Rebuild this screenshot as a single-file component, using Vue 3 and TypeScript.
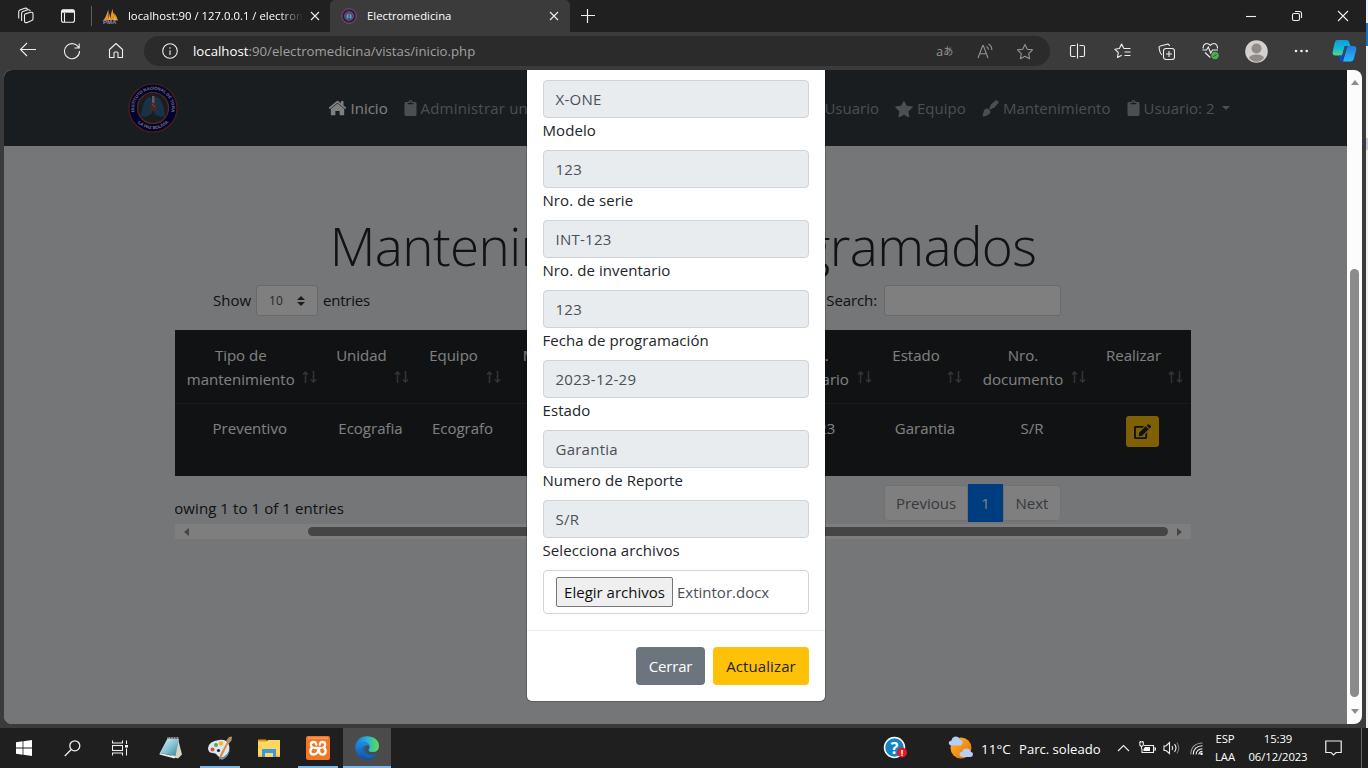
<script setup lang="ts">
interface Field { label: string; value: string }
interface Column { title: string[]; value: string }

const fields: Field[] = [
  { label: 'Modelo', value: 'X-ONE' },
  { label: 'Nro. de serie', value: '123' },
  { label: 'Nro. de inventario', value: 'INT-123' },
  { label: 'Fecha de programación', value: '123' },
  { label: 'Estado', value: '2023-12-29' },
  { label: 'Numero de Reporte', value: 'Garantia' },
  { label: 'Selecciona archivos', value: 'S/R' },
]

const columns: Column[] = [
  { title: ['Tipo de', 'mantenimiento'], value: 'Preventivo' },
  { title: ['Unidad'], value: 'Ecografia' },
  { title: ['Equipo'], value: 'Ecografo' },
  { title: ['Marca'], value: '' },
  { title: [], value: '' },
  { title: [], value: '' },
  { title: ['Nro.', 'inventario'], value: '123' },
  { title: ['Estado'], value: 'Garantia' },
  { title: ['Nro.', 'documento'], value: 'S/R' },
  { title: ['Realizar'], value: '' },
]
</script>

<template>
  <div class="desktop">
    <div class="upper">
      <div class="browser">
        <header class="tabs">
          <div class="tab-tools">
            <svg width="18" height="18" viewBox="0 0 18 18" class="line"><path d="M8.200 6.900 13.500 5.300Q16 4.800 16 7v4.800q0 1.400-1.200 1.800l-4.600 1.900Q7.500 16.200 7.500 14V8q0-.8.700-1.100M4.600 14V6.500Q4.600 5.200 5.800 4.600L10.800 2.800Q12.800 2.300 13.300 4M1.700 11.500V4.800Q1.700 3.600 2.900 3L7.800 1.200Q9.600.8 10.500 2.200"/></svg>
            <svg width="16" height="16" viewBox="0 0 16 16" class="line"><rect x="1.500" y="1.700" width="13" height="12.600" rx="2"/><path d="M4.500 5v9" /><path d="M2 3.200h12" stroke-width="3"/></svg>
          </div>
          <div class="tab first">
            <svg width="17" height="17" viewBox="0 0 17 17"><path d="M1 12.500Q4.500 9 5.500 2.500L7 12zM8 12Q9 5 10.500 .8L12 12zM12.200 5Q15 8 16 12.500h-3.500z" fill="#e89322"/><path d="M6.200 1 8.500 12H7zM10.500 3l3.500 9h-2z" fill="#f7b455"/><text x="1" y="16" class="pma">PMA</text></svg>
            <span class="tab-title faded">localhost:90 / 127.0.0.1 / electrom</span>
            <svg width="10" height="10" viewBox="0 0 10 10" class="line"><path d="m1 1 8 8M9 1 1 9"/></svg>
          </div>
          <div class="tab active">
            <svg width="16" height="16" viewBox="0 0 16 16"><circle cx="8" cy="8" r="7.300" fill="#20205c" stroke="#96495a"/><circle cx="8" cy="8" r="4.400" fill="#39495a" stroke="#9a5058" stroke-width=".8"/><path d="M7.500 5 5.500 7v3.500h2zM8.500 5l2 2v3.500h-2z" fill="#55a1cf"/><path d="M8 5.500v3" stroke="#c9404d" stroke-width="1.200"/></svg>
            <span class="tab-title">Electromedicina</span>
            <svg width="10" height="10" viewBox="0 0 10 10" class="line"><path d="m1 1 8 8M9 1 1 9"/></svg>
          </div>
          <svg class="line new-tab" width="14" height="14" viewBox="0 0 14 14"><path d="M6.500 0v14M0 6.500h14"/></svg>
          <div class="window-buttons">
            <svg width="12" height="12" viewBox="0 0 12 12" class="line"><path d="M1 6.500h10"/></svg>
            <svg width="12" height="12" viewBox="0 0 12 12" class="line"><rect x="1.500" y="3.500" width="7" height="7" rx="1.500"/><path d="M4 1.500h4.500q2 0 2 2V8"/></svg>
            <svg width="12" height="12" viewBox="0 0 12 12" class="line"><path d="m1 1 10 10M11 1 1 11"/></svg>
          </div>
        </header>

        <div class="toolbar">
          <div class="nav-buttons">
            <span><svg width="18" height="16" viewBox="0 0 18 16" class="line"><path d="M17 7.500H1.500M8 1 1.500 7.500 8 14"/></svg></span>
            <span><svg width="18" height="18" viewBox="0 0 18 18" class="line"><path d="M15.800 6A7.500 7.500 0 1 0 16.500 9M16.200 1.500V6H11.500"/></svg></span>
            <span><svg width="16" height="17" viewBox="0 0 16 17" class="line"><path d="M1.500 7.500 8 1.500l6.500 6v8H10V11q0-1-1-1H7q-1 0-1 1v4.500H1.500z" stroke-linejoin="round"/></svg></span>
          </div>
          <div class="address">
            <svg width="16" height="16" viewBox="0 0 16 16" class="line"><circle cx="8" cy="8" r="7.300"/><path d="M8 7.200V12M8 4.300v1.500"/></svg>
            <span class="url"><b>localhost</b>:90/electromedicina/vistas/inicio.php</span>
            <span class="translate">a<small>あ</small></span>
            <svg width="18" height="16" viewBox="0 0 18 16" class="line grey"><path d="M2 15 6.700 2.500h.6L12 15M3.700 10.700h6.600M10.500 3.500q1.800 1 2 3.200M12.500 1q3.500 2 3.300 6"/></svg>
            <svg width="18" height="17" viewBox="0 0 18 17" class="line grey"><path d="m9 1.500 2.300 4.700 5.200.7-3.800 3.700.9 5.200L9 13.300l-4.600 2.500.9-5.200L1.500 6.900l5.200-.7z" stroke-linejoin="round"/></svg>
          </div>
          <div class="extras">
            <span><svg width="17" height="16" viewBox="0 0 17 16" class="line"><path d="M6.500 2.500H3Q1.500 2.500 1.500 4v8q0 1.500 1.500 1.500H6.500M10.500 2.500h3.500Q15.500 2.500 15.500 4v8q0 1.500-1.500 1.500H10.500M8.500 .5v15"/></svg></span>
            <span><svg width="17" height="16" viewBox="0 0 17 16" class="line"><path d="M9.800 5.500 7.600 1 5.400 5.500.8 6.200l3.500 3.300-.8 5 4.200-2.300M9.800 5.500H16.500M10.500 9H16.500M10.500 12.500H16.500" stroke-linejoin="round"/></svg></span>
            <span><svg width="17" height="17" viewBox="0 0 17 17" class="line"><rect x="5.500" y="5.500" width="11" height="11" rx="2.500"/><path d="M11 8v6M8 11h6M3.800 12Q1.500 9.500 1 4.500q0-1.200 1.300-1.500L9 1.200Q11 .8 11.500 3"/></svg></span>
            <span class="health"><svg width="17" height="18" viewBox="0 0 17 18"><path class="line" d="M8.300 15.500 3 10.500M1.200 6.500Q.7 3.500 3 2q2.800-1.500 5.300 1.300Q10.800.5 13.600 2q2.300 1.500 1.800 4.500M.5 8H4.500l1.800-3L8.700 11l1.800-3h5.500"/><circle cx="13" cy="13.500" r="3.700" fill="#4bae4f"/><path d="m11.500 14.500 3-2" stroke="#235b25"/></svg></span>
            <span><svg width="23" height="23" viewBox="0 0 23 23"><circle cx="11.500" cy="11.500" r="11.300" fill="#d4d0cd"/><circle cx="11.500" cy="8.500" r="5" fill="#918c88"/><path d="M4 18q1-3.500 7.500-3.500T19 18q-3 3.700-7.500 3.700T4 18" fill="#918c88"/></svg></span>
            <span><svg width="14" height="4" viewBox="0 0 14 4" fill="#eee"><circle cx="2" cy="2" r="1.300"/><circle cx="7.500" cy="2" r="1.300"/><circle cx="12.700" cy="2" r="1.300"/></svg></span>
          </div>
          <svg class="copilot" width="25" height="24" viewBox="0 0 25 24">
            <defs>
              <linearGradient id="cpA" x1="0" y1="0" x2="0" y2="1"><stop offset="0" stop-color="#0f9ae0"/><stop offset=".55" stop-color="#12bcd0"/><stop offset="1" stop-color="#57d586"/></linearGradient>
              <linearGradient id="cpB" x1="0" y1="0" x2="0" y2="1"><stop offset="0" stop-color="#2b78dc"/><stop offset="1" stop-color="#20baff"/></linearGradient>
            </defs>
            <path d="M5 1h9.500q2 0 2.600 2L18.500 7H15q-2 0-2.800 2.500L10 16.500H3.500Q0 16.500 .7 12.500l2-8.500Q3.300 1 5 1" fill="url(#cpA)"/>
            <path d="M16.500 7h5q3.500 0 2.800 3.500l-2.200 8.500q-.8 3.500-3.600 3.500H11l3-10.500Q15 7 16.500 7" fill="url(#cpB)"/>
            <path d="M7 16.500h5l-1 3.500q-.6 2.500-1.800 2.500-1.200 0-1.600-2.500z" fill="#1b40d6"/>
            <path d="M12.500 7h4q-2 .5-2.700 3L12 16.300l-2 .2 2-7z" fill="#26507a"/>
          </svg>
        </div>

        <div class="viewport">
          <div class="page">
            <nav class="navbar">
              <svg class="brand" width="50" height="50" viewBox="0 0 50 50">
                <defs><path id="arcTop" d="M6.800 29.500A18.700 18.700 0 1 1 43.200 29.500"/><path id="arcBottom" d="M8 37.500A21.200 21.200 0 0 0 42 37.500"/></defs>
                <circle cx="25" cy="25" r="24" fill="#04045e" stroke="#9c3b34" stroke-width="1.200"/>
                <circle cx="25" cy="25" r="15.500" fill="#343a40" stroke="#b8503c" stroke-width="1.200"/>
                <path d="M22 13.500Q17 15 14.500 24L13 33q5 2 8-1 3 0 3-4V17zM28 13.500Q33 15 35.500 24L37 33q-5 2-8-1-3 0-3-4V17z" fill="#33658f"/>
                <path d="M24 13h2.500v8H24z" fill="#b8bccc"/><path d="M23 20q5-1 6.500 4-1 3.500-4.500 4.500-4-3.500-2-8.500" fill="#a04a3c"/><path d="m24 21 3 3" stroke="#d0a8a8"/>
                <text class="seal top"><textPath href="#arcTop" startOffset="1">INSTITUTO NACIONAL DE TORAX</textPath></text>
                <text class="seal"><textPath href="#arcBottom" startOffset="3">LA PAZ BOLIVIA</textPath></text>
              </svg>
              <ul class="menu">
                <li class="current"><svg width="19" height="16" viewBox="0 0 576 512" fill="currentColor"><path d="M288 115 74 290v185q0 16 16 16h130V350h136v141h130q16 0 16-16V290zM12 256l23 28q7 6 15 0L288 88l238 196q8 6 15 0l23-28q5-8-2-15L480 173V45q0-12-12-12h-56q-12 0-12 12v62L318 39q-30-25-60 0L14 241q-7 7-2 15"/></svg><span>Inicio</span></li>
                <li class="wide"><svg width="13" height="16" viewBox="0 0 384 512" fill="currentColor"><path d="M384 112v352q0 48-48 48H48q-48 0-48-48V112q0-48 48-48h80q4-64 64-64t64 64h80q48 0 48 48M192 40a24 24 0 1 0 0 48 24 24 0 0 0 0-48M96 106v20q0 12 12 12h168q12 0 12-12v-20q0-10-12-10H108q-12 0-12 10" fill-rule="evenodd"/></svg><span>Administrar unidades</span></li>
                <li class="users"><span>Usuario</span></li>
                <li class="equipment"><svg width="18" height="17" viewBox="0 0 18 17" fill="currentColor"><path d="m9 .5 2.600 5.200 5.700.8q1 .3.300 1l-4.200 4 1 5.400q0 .8-.8.600L9 14.800l-5 2.700q-.7 0-.6-.8l1-5.300-4-4q-.7-.7.3-1l5.600-.8z"/></svg><span>Equipo</span></li>
                <li class="upkeep"><svg width="17" height="17" viewBox="0 0 17 17" fill="currentColor"><path d="M13.500.6q1.200-.8 2.500.2 1 1.300.2 2.500l-3.800 4.200q-.8.8-1.800.5L8.700 9.800 7 8.100l1.500-1.800q-.2-1 .5-1.700zM6.200 8.800l2 2q.6 1.500-.6 2.700-2.100 2.500-7.100 3Q1 15 1.300 12.800q.5-3 2.200-4 1.500-.8 2.700 0"/></svg><span>Mantenimiento</span></li>
                <li><svg width="13" height="16" viewBox="0 0 384 512" fill="currentColor"><path d="M384 112v352q0 48-48 48H48q-48 0-48-48V112q0-48 48-48h80q4-64 64-64t64 64h80q48 0 48 48M192 40a24 24 0 1 0 0 48 24 24 0 0 0 0-48M96 106v20q0 12 12 12h168q12 0 12-12v-20q0-10-12-10H108q-12 0-12 10" fill-rule="evenodd"/></svg><span>Usuario: 2</span><i class="caret"></i></li>
              </ul>
            </nav>

            <h1>Mantenimientos Programados</h1>

            <section class="listing">
              <div class="controls">
                <span>Show</span>
                <span class="select">10<svg width="8" height="10" viewBox="0 0 8 10" fill="#343a40"><path d="M4 0 8 4H0zM0 6h8L4 10z"/></svg></span>
                <span class="entries">entries</span>
                <span class="search-label">Search:</span>
                <span class="search"></span>
              </div>
              <div class="table">
                <div class="row head">
                  <div v-for="(c, i) in columns" :key="i" class="cell">
                    <div v-for="t in c.title" :key="t">{{ t }}</div>
                    <svg class="sort" width="15" height="12" viewBox="0 0 15 12"><path d="M3.500 12V1M1 3.500 3.500 1 6 3.500M11.500 0v11M9 8.500l2.500 2.500L14 8.500" fill="none" stroke="currentColor" stroke-width="1.500"/></svg>
                  </div>
                </div>
                <div class="row">
                  <div v-for="(c, i) in columns" :key="i" class="cell">
                    <span v-if="i < columns.length - 1">{{ c.value }}</span>
                    <span v-else class="edit"><svg width="17" height="15" viewBox="0 0 576 512" fill="#212529"><path d="m402 84 90 90q6 6 0 12L274 404l-93 10q-20 1-20-20l10-93L389 84q6-6 13 0m162-22-49-49q-23-21-46 0l-35 35q-6 6 0 12l90 90q6 6 12 0l36-35q21-27-8-53M384 346v102H64V128h230l50-64H48Q0 64 0 112v352q0 48 48 48h352q48 0 48-48V282z"/></svg></span>
                  </div>
                </div>
              </div>
              <div class="footer">
                <div class="info"><span>Showing 1 to 1 of 1 entries</span></div>
                <div class="pager"><span class="prev">Previous</span><span class="now">1</span><span class="next">Next</span></div>
              </div>
              <div class="hscroll"><i class="left"></i><div class="thumb"></div><i class="right"></i></div>
            </section>
            <div class="backdrop"></div>
            <div class="modal">
              <div class="modal-body">
                <template v-for="f in fields" :key="f.label">
                  <div class="control">{{ f.value }}</div>
                  <label>{{ f.label }}</label>
                </template>
                <div class="control file"><span class="choose">Elegir archivos</span><span>Extintor.docx</span></div>
              </div>
              <div class="modal-footer">
                <button class="close" type="button">Cerrar</button>
                <button class="update" type="button">Actualizar</button>
              </div>
            </div>
          </div>
          <div class="vscroll"><i class="up"></i><div class="thumb"></div><i class="down"></i></div>
        </div>
      </div>
      <div class="behind"></div>
    </div>

    <footer class="taskbar">
      <span class="sys"><svg width="16" height="16" viewBox="0 0 16 16" fill="#fff"><path d="M0 2.200 6.600 1.300v6.300H0zM7.400 1.200 16 0v7.600H7.400zM0 8.400h6.600v6.300L0 13.800zM7.400 8.400H16V16l-8.600-1.200z"/></svg></span>
      <span class="sys"><svg width="17" height="17" viewBox="0 0 17 17" class="line"><circle cx="10.800" cy="5.800" r="5" stroke-width="1.300"/><path d="M7.200 9.500.8 16" stroke-width="1.300"/></svg></span>
      <span class="sys"><svg width="16" height="16" viewBox="0 0 16 16" class="line"><path d="M.5.500V3h10V.5M.5 15.500V13h10v2.500M14.500 .5v3.500M14.500 8.500V15.500" /><rect x=".5" y="5.500" width="10" height="5"/><path d="M13 5h3v2.500h-3z" fill="#fff" stroke="none"/></svg></span>
      <span class="app first-app"><svg width="24" height="24" viewBox="0 0 24 24"><defs><linearGradient id="np" x1="0" y1="0" x2="1" y2="1"><stop offset="0" stop-color="#e0f6f8"/><stop offset=".55" stop-color="#7fc0d2"/><stop offset="1" stop-color="#347f95"/></linearGradient></defs><path d="m19 3 4 15.500-4 4-7-2z" fill="#d9d5c0"/><path d="M8.500 2.500 20 3l-3.500 17L.8 17z" fill="url(#np)"/><path d="M.8 17l15.700 3.500-1 2L.5 18.500z" fill="#eee"/><path d="M8.500 2h11.500" stroke="#ccc" stroke-width="1.600" stroke-dasharray="1 .6"/></svg></span>
      <span class="app running"><svg width="24" height="24" viewBox="0 0 24 24"><path d="M11 4q8-1 10 5 2 7-4 11-4 3-7 0-2-3-5-3-5 0-5-5 1-7 11-8" fill="#d9e8f5"/><path d="M11 22q9-1 11-9-1 8-8 11z" fill="#6695b9"/><circle cx="4.500" cy="13.500" r="2" fill="#e34c42"/><circle cx="8" cy="9" r="2" fill="#55ae38"/><circle cx="13" cy="7.500" r="2.200" fill="#f4b51e"/><circle cx="10.500" cy="14.500" r="1.600" fill="#252525"/><path d="m19 6 1.500 1L14 20l-3 4 1-5z" fill="#e4893a"/><path d="m18 5 3-4 3-.5-.5 4L20.500 8z" fill="#b98d63"/></svg></span>
      <span class="app"><svg width="22" height="20" viewBox="0 0 22 20"><path d="M0 1.500h8L10 4H0z" fill="#e29a0d"/><path d="M0 3.500h8.500L10 2h12v17H0z" fill="#ffd660"/><path d="M4 11h14v8h-3v-4H7v4H4z" fill="#3d97dc"/><path d="M0 17.500h4V19H0zM18 17.500h4V19h-4z" fill="#edbd37"/></svg></span>
      <span class="app running"><svg width="24" height="24" viewBox="0 0 24 24"><rect width="24" height="24" rx="2" fill="#f37623"/><path d="M2 1.500h20V3H2z" fill="#fa9e66"/><path d="M10.200 8.500Q10 5.800 7.500 6 4.800 6.200 4.800 8.700q0 2 2 2.900-2.500.9-2.500 3.700.2 3 3.300 3.200 2.400 0 3.600-1.800l1.600-3.100M13.800 8.500Q14 5.800 16.500 6q2.700.2 2.700 2.700 0 2-2 2.900 2.500.9 2.500 3.700-.2 3-3.300 3.200-2.400 0-3.200-2.300v-1.500M8.800 12h6" fill="none" stroke="#fff" stroke-width="2.300" stroke-linecap="round" stroke-linejoin="round"/></svg></span>
      <span class="app focused"><svg width="24" height="24" viewBox="0 0 24 24"><defs><linearGradient id="edA"><stop stop-color="#1578cb"/><stop offset=".5" stop-color="#26b4da"/><stop offset="1" stop-color="#60df4b"/></linearGradient><linearGradient id="edB" x1="0" y1="0" x2="0" y2="1"><stop stop-color="#238ddf"/><stop offset="1" stop-color="#0b50a7"/></linearGradient></defs><path d="M.3 10Q2 .2 12 .2 24 1 24 10.500q-.5 5.500-6.500 5.500-4 0-4-2 1.500-1.500 1-4-1-3-4.500-3Q4 7 .3 12z" fill="url(#edA)"/><path d="M0 12Q2 6 8 5.500q6 0 6.500 5-3-2.500-4.500.5-1.500 5 3.500 7.500 5 2 9-.7Q20 22 15.500 23.500 3 25.500 0 12" fill="url(#edB)"/><path d="M8.800 10Q5 15 9 19.500q5 4.500 12-.5-8 1.500-11-4-1.200-3 0-5z" fill="#1067b7"/></svg></span>

      <div class="tray">
        <svg class="help" width="25" height="24" viewBox="0 0 25 24"><circle cx="11.500" cy="11.500" r="10" fill="#1584c7" stroke="#fff" stroke-width="1.500"/><text x="11.500" y="17.500" class="question">?</text><circle cx="19" cy="16.500" r="5" fill="#e71921"/><text x="19" y="20" class="bang">!</text></svg>
        <svg class="weather" width="25" height="24" viewBox="0 0 25 24"><defs><linearGradient id="sun" x1="0" y1="0" x2="1" y2="1"><stop stop-color="#ffb92a"/><stop offset="1" stop-color="#e56d08"/></linearGradient></defs><circle cx="13" cy="12" r="10.500" fill="url(#sun)"/><path d="M3.500 9.500Q.5 9 .8 6.500 1.500 4.500 3.500 4.500 4 1 7.500.5q3.500 0 4.300 3 2.700.5 2.700 3.200-.5 2.800-3 2.800zM14.500 21q-3-.5-3-2.700 0-2.500 2.800-2.600.7-3.200 4.200-3.200t4 3.300q2.500.3 2.500 2.500 0 2.500-2.500 2.700z" fill="#b8cef6"/></svg>
        <span class="temp">11°C</span><span class="forecast">Parc. soleado</span>
        <svg class="chevron line" width="13" height="8" viewBox="0 0 13 8"><path d="m1 7 5.500-5.500L12 7"/></svg>
        <svg class="battery line" width="17" height="14" viewBox="0 0 17 14"><path d="M5 4.500h9.500v7H3V8M15 7h1.500v2H15M.8 1h3.500v3Q3 6.500 1 4.500zM1.500 0v1M3.500 0v1M2.500 5v3"/><path d="M6 6h5v4H4.500V8z" fill="#fff" stroke="none"/></svg>
        <svg class="speaker line" width="17" height="14" viewBox="0 0 17 14"><path d="M1 5h2l3.500-3.500v11L3 9.500H1zM9 5q1.500 2 0 4M11.500 3.200q3 3.800 0 7.600"/><path d="M13.800 1.500q4 5.500 0 11" stroke="#777"/></svg>
        <svg class="wifi line" width="13" height="13" viewBox="0 0 13 13"><path d="M.8 12.500Q1 1.500 12.500 1" stroke="#999"/><path d="M3.300 12.500Q3.500 4 12.500 3.800M6 12.500Q6.500 7 12.500 6.700M8.800 12.500q.4-3 3.700-3.200"/><circle cx="11.500" cy="11.700" r="1.300" fill="#fff" stroke="none"/></svg>
        <div class="lang"><span>ESP</span><span>LAA</span></div>
        <div class="clock"><span>15:39</span><span>06/12/2023</span></div>
        <svg class="notice line" width="17" height="17" viewBox="0 0 17 17"><path d="M.8 1h15.400v11.500H11L8.500 15 6 12.500H.8z" stroke-width="1.200"/></svg>
        <i class="peek"></i>
      </div>
    </footer>
  </div>
</template>

<style>
body { margin: 0; overflow: hidden; }
</style>

<style scoped>
* { box-sizing: border-box; }
.desktop { width: 1368px; height: 768px; display: flex; flex-direction: column; background: #1f1f1f; font: 15px/24px "Open Sans", "Noto Sans", sans-serif; color: #212529; overflow: hidden; white-space: nowrap; }
svg { display: block; flex: none; }
.line { fill: none; stroke: #eee; stroke-width: 1.1; }
.line.grey { stroke: #949494; }
.upper { display: flex; height: 728px; flex: none; }
.behind { width: 2px; background: linear-gradient(#e9f2fa 0 23px, #1a76c8 23px 46px, #f5f5f5 46px 138px, #c3cbd8 138px 150px, #f0f0f0 150px); }
.browser { width: 1366px; background: #3b3b3b; display: flex; flex-direction: column; }

.tabs { height: 32px; background: #202020; display: flex; align-items: center; color: #fff; font-size: 11.3px; }
.tab-tools { width: 92px; height: 20px; padding-left: 17px; display: flex; align-items: center; gap: 25px; border-right: 1px solid #5d5d5d; }
.tab { display: flex; align-items: center; height: 32px; }
.tab.first { width: 238px; padding-left: 10px; }
.tab.active { width: 240px; padding-left: 11px; background: #3b3b3b; border-radius: 5px 5px 0 0; }
.tab-title { width: 182px; margin-left: 10px; overflow: hidden; }
.tab.first .tab-title { width: 175px; margin-left: 9px; margin-right: 7px; letter-spacing: .02px; }
.faded { mask-image: linear-gradient(90deg, #000 86%, transparent); }
.new-tab { margin-left: 11px; stroke-width: 1.2; }
.window-buttons { margin-left: auto; display: flex; gap: 34px; padding-right: 17px; }
.pma { font: bold 6px "Liberation Sans", sans-serif; fill: #8d8fb9; }

.toolbar { height: 38px; display: flex; align-items: center; flex: none; }
.nav-buttons { display: flex; padding-left: 6px; width: 144px; }
.nav-buttons span { width: 44px; display: flex; justify-content: center; }
.address { width: 906px; height: 30px; border-radius: 15px; background: #2b2b2b; display: flex; align-items: center; padding: 0 16px 0 18px; }
.url { color: #a0a0a0; font-size: 13.2px; margin-left: 15px; margin-right: auto; letter-spacing: .02px; }
.url b { color: #fff; font-weight: 400; }
.translate { color: #949494; font-size: 13px; line-height: 16px; margin-right: 22px; width: 18px; display: flex; align-items: center; }
.translate small { font: 10px/12px "Noto Sans CJK JP", sans-serif; }
.translate + svg { margin-right: 22px; }
.extras { display: flex; margin-left: 5px; }
.extras span { width: 44.7px; display: flex; justify-content: center; align-items: center; }
.extras .health { padding-right: 2px; }
.copilot { margin-left: 9px; }

.viewport { margin-left: 4px; width: 1358px; height: 654px; border-radius: 8px; overflow: hidden; display: flex; }
.page { width: 1343px; height: 654px; background: #e9ecef; position: relative; overflow: hidden; }
.vscroll { width: 15px; background: #fcfcfc; display: flex; flex-direction: column; align-items: center; }
.up, .down { border: 4.5px solid transparent; }
.up { border-bottom: 5px solid #8b8b8b; border-top: 0; margin-top: 10px; }
.down { border-top: 5px solid #8b8b8b; border-bottom: 0; margin-top: 12px; }
.vscroll .thumb { width: 9px; height: 428px; margin-top: 184px; background: #8b8b8b; border-radius: 5px; }

.navbar { height: 76px; background: #343a40; display: flex; align-items: center; padding-left: 124px; color: #999ca0; }
.menu { list-style: none; margin: 0 0 0 150px; padding: 0; display: flex; }
.menu li { display: flex; align-items: center; gap: 3.5px; }
.menu .current { width: 76px; color: #fff; }
.menu .wide { width: 260px; letter-spacing: .2px; }
.menu .users { width: 231px; justify-content: flex-end; padding-right: 16px; }
.menu .equipment { width: 87px; gap: 4px; }
.menu .upkeep { width: 145px; gap: 4px; }
.caret { border: 4.5px solid transparent; border-top-color: #999ca0; border-bottom: 0; margin-left: 4px; }
.seal { font: bold 4.3px "Liberation Sans", sans-serif; fill: #e2e2ef; }
.seal.top { font-size: 4.2px; }

h1 { margin: 66px 0 0; padding-left: 15px; height: 70px; text-align: center; font-weight: 300; font-size: 53px; line-height: 67px; letter-spacing: -.62px; }

.listing { width: 1016px; margin-left: 171px; overflow: hidden; }
.controls { height: 48px; display: flex; align-items: center; padding: 0 0 12px 38px; }
.controls > span:not(.select) { margin-top: -1px; }
.controls > .search:not(.select) { margin-top: 0; }
.select { width: 62px; height: 31px; margin: 0 5px; border: 1px solid #ced4da; border-radius: 3px; background: #fff; display: flex; align-items: center; justify-content: space-between; padding: 1px 12px 0; font-size: 12px; color: #495057; }
.entries { letter-spacing: -.25px; }
.search-label { margin-left: auto; margin-right: 7px; letter-spacing: -.1px; }
.search { width: 177px; height: 31px; background: #fff; border: 1px solid #ced4da; border-radius: 3px; margin-right: 130px; }
.table { background: #212529; color: #fff; height: 146px; }
.row { display: grid; grid-template-columns: 149.5px 92px 92px 90px 92px 74.5px 115px 90px 124px 97px; height: 72px; text-align: center; }
.row.head { height: 74px; border-bottom: 1px solid #32383e; }
.cell { padding-top: 12px; position: relative; }
.head .cell { padding: 13px 30px 0 12px; }
.head .cell div { display: flex; justify-content: center; }
.sort { position: absolute; right: 8px; bottom: 20px; color: #65686b; }
.edit { display: flex; width: 33px; height: 31px; margin: 0 auto; background: #ffc107; border-radius: 3px; align-items: center; justify-content: center; }
.footer { height: 48px; display: flex; justify-content: space-between; }
.info { width: 169px; display: flex; justify-content: flex-end; padding-top: 20px; letter-spacing: .08px; }
.pager { display: flex; align-items: center; margin: 8px 130px 2px 0; color: #6c757d; }
.pager span { height: 36px; display: flex; align-items: center; justify-content: center; background: #fff; border: 1px solid #dee2e6; }
.pager .prev { width: 84px; border-radius: 4px 0 0 4px; }
.pager .now { width: 35px; height: 38px; background: #007bff; border-color: #007bff; color: #fff; }
.pager .next { width: 58px; border-radius: 0 4px 4px 0; }
.hscroll { height: 15px; background: #fcfcfc; display: flex; align-items: center; }
.hscroll .thumb { width: 860px; height: 9px; border-radius: 5px; background: #8b8b8b; margin: 0 9px 0 119px; }
.left, .right { border: 4.5px solid transparent; }
.left { border-right: 5px solid #8b8b8b; border-left: 0; margin-left: 9px; }
.right { border-left: 5px solid #8b8b8b; border-right: 0; }

.backdrop { position: absolute; inset: 0; background: rgba(0, 0, 0, .5); }
.modal { position: absolute; left: 523px; top: 0; width: 298px; height: 631px; background: #fff; border-radius: 0 0 5px 5px; box-shadow: 0 0 0 1px rgba(0, 0, 0, .2); }
.modal-body { padding: 10px 16px 16px; border-bottom: 1px solid #e9ecef; }
.control { height: 38px; border: 1px solid #ced4da; border-radius: 4px; background: #e9ecef; color: #495057; padding: 6px 11.5px; letter-spacing: .25px; }
label { display: block; height: 24px; margin-bottom: 8px; letter-spacing: .08px; text-indent: -.5px; }
.control.file { height: 44px; background: #fff; display: flex; align-items: center; gap: 4px; padding: 0 12px; letter-spacing: 0; }
.choose { height: 30px; width: 117px; line-height: 29px; text-align: center; color: #111; background: #efefef; border: 1px solid #767676; border-radius: 2px; }
.modal-footer { display: flex; justify-content: flex-end; gap: 8px; padding: 16px; }
button { font: inherit; height: 38px; border: 0; border-radius: 4px; padding: 0; }
.close { width: 69px; background: #6c757d; color: #fff; letter-spacing: -.15px; }
.update { width: 96px; background: #ffc107; color: #212529; letter-spacing: .1px; }

.taskbar { height: 40px; background: #1f1f1f; display: flex; color: #fff; }
.sys, .app { width: 48px; height: 40px; display: flex; align-items: center; justify-content: center; flex: none; }
.app { margin-right: 1px; }
.first-app { margin-left: 3px; }
.running { background: linear-gradient(#76b9ed, #76b9ed) center bottom / 40px 2px no-repeat; }
.focused { background: #4b4b4b; border-bottom: 2px solid #76b9ed; padding-top: 2px; }
.tray { display: flex; align-items: center; margin-left: auto; }
.weather { margin-left: 40px; }
.temp { font-size: 13.5px; margin-left: 8px; width: 38px; margin-top: 2px; }
.forecast { font-size: 13.1px; width: 82px; margin-top: 2px; }
.chevron { margin-left: 16px; }
.battery { margin-left: 9px; }
.speaker { margin-left: 7px; }
.wifi { margin-left: 10px; }
.lang, .clock { display: flex; flex-direction: column; text-align: center; font-size: 11.3px; line-height: 18px; letter-spacing: -.1px; }
.lang { width: 24px; margin-left: 10px; }
.clock { width: 62px; margin-left: 10px; }
.notice { margin-left: 16px; }
.peek { width: 7px; height: 40px; border-left: 1px solid #666; margin-left: 19px; }
.question { font: bold 16px "Open Sans", sans-serif; fill: #fff; text-anchor: middle; }
.bang { font: bold 9px "Open Sans", sans-serif; fill: #fff; text-anchor: middle; }
</style>
